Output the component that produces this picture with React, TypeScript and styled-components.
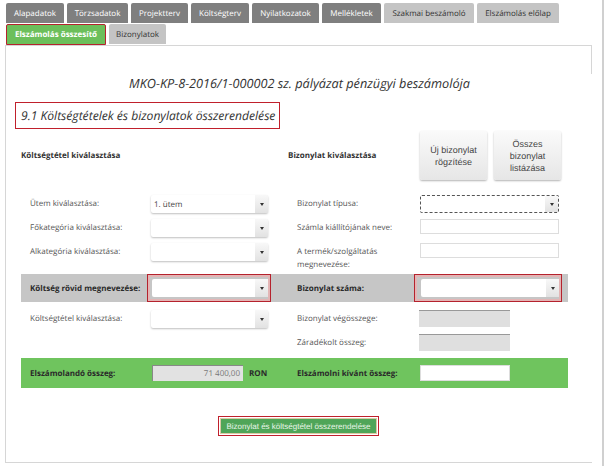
import React from 'react';
import styled, { createGlobalStyle } from 'styled-components';

const Global = createGlobalStyle`
  html, body { margin: 0; padding: 0; background: #fff; }
  body {
    font-family: "Open Sans", "Liberation Sans", sans-serif;
    color: #333;
    text-rendering: geometricPrecision;
  }
`;

const Page = styled.div`
  width: 604px;
  height: 466px;
  box-sizing: border-box;
  padding: 3px 0 0 6px;
  border-right: 2px solid #d0d0d0;
  overflow: hidden;
`;

const TabRow = styled.div`
  display: flex;
  gap: 3px;
  height: 21px;
`;

const Tab = styled.div<{ $kind: 'dark' | 'light' | 'green'; $w: number }>`
  box-sizing: border-box;
  width: ${p => p.$w}px;
  height: ${p => (p.$kind === 'green' ? 21 : 20)}px;
  display: flex;
  align-items: center;
  justify-content: center;
  border-radius: 2px 2px 0 0;
  font-size: 8px;
  white-space: nowrap;
  font-weight: ${p => (p.$kind === 'green' ? 700 : 400)};
  background: ${p => (p.$kind === 'dark' ? '#7f7f7f' : p.$kind === 'green' ? '#6cbf5b' : '#c4c4c4')};
  color: ${p => (p.$kind === 'light' ? '#333' : '#fff')};
  border: ${p => (p.$kind === 'green' ? '1px solid #b5222d' : 'none')};
`;

const Panel = styled.div`
  position: relative;
  width: 587px;
  height: 418px;
  margin-left: -1px;
  box-sizing: border-box;
  border: solid #d6d6d6;
  border-width: 1px 0 1px 1px;
  padding: 28px 0 0 15px;
  &::after {
    content: '';
    position: absolute;
    right: 0;
    top: 0;
    width: 1px;
    height: 28px;
    background: #d6d6d6;
  }
`;

const Title = styled.div`
  width: 557px;
  text-align: center;
  font-size: 12.7px;
  line-height: 19px;
  font-style: italic;
  color: #333;
`;

const Heading = styled.div`
  box-sizing: border-box;
  width: 265px;
  height: 27px;
  margin: 9px 0 0 -6px;
  padding-left: 5px;
  border: 1px solid #c0202c;
  font-size: 12.1px;
  line-height: 25px;
  font-style: italic;
  white-space: nowrap;
`;

const SectionRow = styled.div`
  display: grid;
  grid-template-columns: 267px 132px 67px 67px;
  column-gap: 0;
  align-items: center;
  height: 49px;
  margin-top: 2px;
  width: 547px;
`;

const SectionLabel = styled.div`
  font-size: 8px;
  font-weight: 700;
  color: #333;
  white-space: nowrap;
`;

const ActionButtons = styled.div`
  display: flex;
  gap: 7px;
  grid-column: 3 / 5;
`;

const BigButton = styled.div`
  box-sizing: border-box;
  width: 67px;
  height: 49px;
  flex: none;
  display: flex;
  align-items: center;
  justify-content: center;
  text-align: center;
  font-family: "Liberation Sans", Arial, sans-serif;
  font-size: 9px;
  line-height: 12px;
  color: #444;
  border-radius: 2px;
  background: linear-gradient(#fafafa, #e6e6e6);
  box-shadow: 0 1px 2px rgba(0, 0, 0, 0.3);
`;

const Rows = styled.div`
  margin-top: 15px;
  width: 547px;
`;

const Row = styled.div<{ $h?: number; $band?: 'gray' | 'green' }>`
  display: grid;
  grid-template-columns: 130px 137px 132px 148px;
  align-items: ${p => (p.$band ? 'center' : 'start')};
  height: ${p => p.$h ?? 24}px;
  background: ${p => (p.$band === 'gray' ? '#c6c6c6' : p.$band === 'green' ? '#6fc45e' : 'transparent')};
  margin-bottom: ${p => (p.$band === 'gray' ? 8 : 0)}px;
`;

const Label = styled.div<{ $strong?: boolean }>`
  padding: ${p => (p.$strong ? 0 : 2)}px 0 0 9px;
  font-size: 8px;
  line-height: 13px;
  font-weight: ${p => (p.$strong ? 700 : 400)};
  color: ${p => (p.$strong ? '#2a2a2a' : '#555')};
  white-space: nowrap;
`;

const SelectBox = styled.div<{ $w: number; $dashed?: boolean; $flagged?: boolean }>`
  box-sizing: border-box;
  width: ${p => p.$w}px;
  height: 18px;
  display: flex;
  align-items: center;
  justify-content: space-between;
  background: #fff;
  font-size: 8px;
  color: #444;
  border: ${p => (p.$dashed ? '1px dashed #555' : 'none')};
  border-radius: 2px;
  box-shadow: ${p => (p.$dashed || p.$flagged ? 'none' : '0 1px 2px rgba(0, 0, 0, 0.25)')};
  padding-left: 3px;
`;

const Arrow = styled.div`
  width: 13px;
  align-self: stretch;
  flex: none;
  display: flex;
  align-items: center;
  justify-content: center;
  background: linear-gradient(#f8f8f8, #e2e2e2);
  &::after {
    content: '';
    border: solid transparent;
    border-width: 3px 2.5px 0;
    border-top-color: #333;
  }
`;

const Flag = styled.div`
  box-sizing: border-box;
  width: 124px;
  height: 28px;
  margin-left: -4px;
  padding: 4px 3px 0 4px;
  border: 1px solid #b5222d;
  box-shadow: inset 0 0 0 2px #e3b5b5;
`;

const WideFlag = styled(Flag)`
  width: 148px;
  margin-left: -6px;
  padding-left: 6px;
`;

const TextInput = styled.div<{ $w: number; $h?: number }>`
  box-sizing: border-box;
  width: ${p => p.$w}px;
  height: ${p => p.$h ?? 15}px;
  background: #fff;
  border: 1px solid #ddd;
`;

const ReadOnly = styled.div`
  box-sizing: border-box;
  width: 91px;
  height: 17px;
  margin-left: -1px;
  background: #dfdfdf;
  border-top: 1px solid #999;
`;

const AmountCell = styled.div`
  display: flex;
  align-items: center;
  gap: 6px;
  margin-left: 1px;
`;

const Amount = styled.div`
  box-sizing: border-box;
  width: 91px;
  height: 16px;
  padding-right: 3px;
  text-align: right;
  font-size: 8px;
  line-height: 16px;
  color: #777;
  background: #e2e2e2;
  border-top: 1px solid #888;
  border-left: 1px solid #888;
`;

const Unit = styled.span`
  font-size: 8px;
  font-weight: 700;
  color: #2a2a2a;
`;

const SubmitWrap = styled.div`
  width: 547px;
  display: flex;
  justify-content: center;
  margin: 28px 0 0 4px;
`;

const SubmitFrame = styled.div`
  box-sizing: border-box;
  width: 161px;
  height: 20px;
  padding: 1px;
  border: 1px solid #c0202c;
`;

const Submit = styled.div`
  height: 16px;
  display: flex;
  align-items: center;
  justify-content: center;
  background: #4fa558;
  border: 1px solid #d9c9a5;
  box-sizing: border-box;
  color: #e9f5e9;
  font-family: "Liberation Sans", Arial, sans-serif;
  font-size: 8px;
  white-space: nowrap;
`;

const topTabs: { t: string; w: number; k: 'dark' | 'light' }[] = [
  { t: 'Alapadatok', w: 58, k: 'dark' },
  { t: 'Törzsadatok', w: 61, k: 'dark' },
  { t: 'Projektterv', w: 57, k: 'dark' },
  { t: 'Költségterv', w: 58, k: 'dark' },
  { t: 'Nyilatkozatok', w: 67, k: 'dark' },
  { t: 'Mellékletek', w: 59, k: 'dark' },
  { t: 'Szakmai beszámoló', w: 90, k: 'light' },
  { t: 'Elszámolás előlap', w: 82, k: 'light' },
];

export default function App() {
  return (
    <Page>
      <Global />
      <TabRow>
        {topTabs.map(tab => (
          <Tab key={tab.t} $kind={tab.k} $w={tab.w}>{tab.t}</Tab>
        ))}
      </TabRow>
      <TabRow>
        <Tab $kind="green" $w={100}>Elszámolás összesítő</Tab>
        <Tab $kind="light" $w={57}>Bizonylatok</Tab>
      </TabRow>
      <Panel>
        <Title>MKO-KP-8-2016/1-000002 sz. pályázat pénzügyi beszámolója</Title>
        <Heading>9.1 Költségtételek és bizonylatok összerendelése</Heading>
        <SectionRow>
          <SectionLabel>Költségtétel kiválasztása</SectionLabel>
          <SectionLabel>Bizonylat kiválasztása</SectionLabel>
          <ActionButtons>
            <BigButton>Új bizonylat<br />rögzítése</BigButton>
            <BigButton>Összes<br />bizonylat<br />listázása</BigButton>
          </ActionButtons>
        </SectionRow>
        <Rows>
          <Row>
            <Label>Ütem kiválasztása:</Label>
            <SelectBox $w={117}>1. ütem<Arrow /></SelectBox>
            <Label>Bizonylat típusa:</Label>
            <SelectBox $w={139} $dashed><span /><Arrow /></SelectBox>
          </Row>
          <Row>
            <Label>Főkategória kiválasztása:</Label>
            <SelectBox $w={117}><span /><Arrow /></SelectBox>
            <Label>Számla kiállítójának neve:</Label>
            <TextInput $w={139} />
          </Row>
          <Row $h={31}>
            <Label>Alkategória kiválasztása:</Label>
            <SelectBox $w={117}><span /><Arrow /></SelectBox>
            <Label>A termék/szolgáltatás<br />megnevezése:</Label>
            <TextInput $w={139} />
          </Row>
          <Row $h={28} $band="gray">
            <Label $strong>Költség rövid megnevezése:</Label>
            <Flag>
              <SelectBox $w={116} $flagged><span /><Arrow /></SelectBox>
            </Flag>
            <Label $strong>Bizonylat száma:</Label>
            <WideFlag>
              <SelectBox $w={138} $flagged><span /><Arrow /></SelectBox>
            </WideFlag>
          </Row>
          <Row>
            <Label>Költségtétel kiválasztása:</Label>
            <SelectBox $w={117}><span /><Arrow /></SelectBox>
            <Label>Bizonylat végösszege:</Label>
            <ReadOnly />
          </Row>
          <Row>
            <span />
            <span />
            <Label>Záradékolt összeg:</Label>
            <ReadOnly />
          </Row>
          <Row $h={30} $band="green">
            <Label $strong>Elszámolandó összeg:</Label>
            <AmountCell>
              <Amount>71 400,00</Amount>
              <Unit>RON</Unit>
            </AmountCell>
            <Label $strong>Elszámolni kívánt összeg:</Label>
            <TextInput $w={90} $h={16} />
          </Row>
        </Rows>
        <SubmitWrap>
          <SubmitFrame>
            <Submit>Bizonylat és költségtétel összerendelése</Submit>
          </SubmitFrame>
        </SubmitWrap>
      </Panel>
    </Page>
  );
}
